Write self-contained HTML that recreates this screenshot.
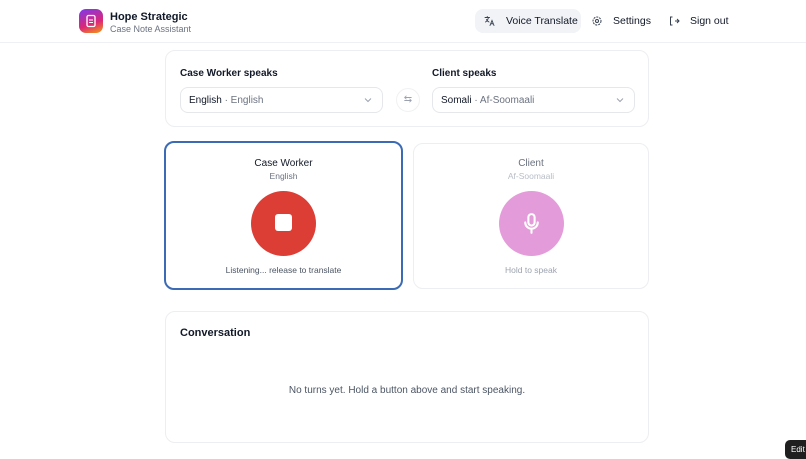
<!DOCTYPE html>
<html><head><meta charset="utf-8"><style>
*{box-sizing:border-box;margin:0;padding:0}
body{width:806px;height:459px;overflow:hidden;background:#fff;font-family:"Liberation Sans",sans-serif;color:#1f2937;position:relative}
.hdr{position:absolute;left:0;top:0;width:806px;height:43px;border-bottom:1px solid #eef0f3;background:#fff}
.logo{position:absolute;left:79px;top:9px;width:24px;height:24px;border-radius:7px;background:linear-gradient(160deg,#7c3aed,#db2777 60%,#f59e0b)}
.t1{position:absolute;left:110px;top:11px;font-size:11px;font-weight:bold;color:#111827}
.t2{position:absolute;left:110px;top:24px;font-size:9px;color:#6b7280}
.nav{position:absolute;top:9px;height:24px;font-size:10.5px;color:#111827;display:flex;align-items:center;white-space:nowrap}
.card{position:absolute;background:#fff;border:1px solid #eceef1;border-radius:10px}
.lbl{position:absolute;font-size:10px;font-weight:bold;color:#111827}
.sel{position:absolute;height:26px;border:1px solid #e5e7eb;border-radius:8px;font-size:10px;padding:7px 8px;color:#111827}
.sel span{color:#6b7280}
.chev{position:absolute;right:10px;top:8px}
.c{text-align:center;position:absolute;width:100%}
</style></head><body>
<div class="hdr">
<div class="logo"><svg width="24" height="24" viewBox="0 0 24 24"><rect x="8" y="6.5" width="8" height="11" rx="1.5" fill="none" stroke="#fff" stroke-width="1.3"/><path d="M10 11h4M10 13.5h4" stroke="#fff" stroke-width="1.1"/></svg></div>
<div class="t1">Hope Strategic</div><div class="t2">Case Note Assistant</div>
<div class="nav" style="left:475px;width:106px;background:#f1f3f6;border-radius:8px;padding-left:9px"><svg width="12" height="12" viewBox="0 0 24 24" fill="none" stroke="#374151" stroke-width="1.8" stroke-linecap="round"><path d="M2 5h9M6.5 3v2M9 5c-1 4-3 7-6 9M5 9c1 2 3 4 5 5M12 21l4-10 4 10M13.5 17.5h5"/></svg><span style="margin-left:10px">Voice Translate</span></div>
<div class="nav" style="left:591px"><svg width="12" height="12" viewBox="0 0 24 24" fill="none" stroke="#374151" stroke-width="2"><circle cx="12" cy="12" r="3"/><circle cx="12" cy="12" r="8" stroke-dasharray="4 2"/></svg><span style="margin-left:10px">Settings</span></div>
<div class="nav" style="left:668px"><svg width="12" height="12" viewBox="0 0 24 24" fill="none" stroke="#374151" stroke-width="2"><path d="M9 4H5v16h4M14 12h7M18 8l4 4-4 4"/></svg><span style="margin-left:10px">Sign out</span></div>
</div>
<div class="card" style="left:165px;top:50px;width:484px;height:77px">
<div class="lbl" style="left:14px;top:17px">Case Worker speaks</div>
<div class="lbl" style="left:266px;top:17px">Client speaks</div>
<div class="sel" style="left:14px;top:36px;width:203px">English <span>· English</span><svg class="chev" width="8" height="8" viewBox="0 0 8 8"><path d="M1 2.5l3 3 3-3" fill="none" stroke="#9ca3af"/></svg></div>
<div style="position:absolute;left:230px;top:37px;width:24px;height:24px;border-radius:12px;border:1px solid #f0f1f3;font-size:10px;color:#9ca3af;text-align:center;line-height:22px">⇆</div>
<div class="sel" style="left:266px;top:36px;width:203px">Somali <span>· Af-Soomaali</span><svg class="chev" width="8" height="8" viewBox="0 0 8 8"><path d="M1 2.5l3 3 3-3" fill="none" stroke="#9ca3af"/></svg></div>
</div>
<div class="card" style="left:164px;top:141px;width:239px;height:149px;border:2px solid #3b6bb5">
<div class="c" style="top:15px;font-size:10px;color:#111827">Case Worker</div>
<div class="c" style="top:28px;font-size:8.5px;color:#6b7280">English</div>
<div style="position:absolute;left:85px;top:48px;width:65px;height:65px;border-radius:50%;background:#dc3d35"><div style="position:absolute;left:24px;top:23px;width:17px;height:17px;background:#fff;border-radius:3px"></div></div>
<div class="c" style="top:122px;font-size:8.5px;color:#4b5563">Listening... release to translate</div>
</div>
<div class="card" style="left:413px;top:143px;width:236px;height:146px">
<div class="c" style="top:14px;font-size:10px;color:#6b7280">Client</div>
<div class="c" style="top:27px;font-size:8.5px;color:#b8bdc6">Af-Soomaali</div>
<div style="position:absolute;left:85px;top:47px;width:65px;height:65px;border-radius:50%;background:#e49bd9"><svg style="position:absolute;left:20px;top:20px" width="25" height="25" viewBox="0 0 24 24" fill="none" stroke="#fff" stroke-width="2" stroke-linecap="round"><rect x="9" y="3" width="6" height="11" rx="3"/><path d="M6 11a6 6 0 0 0 12 0M12 17v4"/></svg></div>
<div class="c" style="top:121px;font-size:8.5px;color:#9ca3af">Hold to speak</div>
</div>
<div class="card" style="left:165px;top:311px;width:484px;height:132px">
<div style="position:absolute;left:14px;top:15px;font-size:11px;font-weight:bold;color:#111827">Conversation</div>
<div class="c" style="top:73px;font-size:10px;color:#4b5563">No turns yet. Hold a button above and start speaking.</div>
</div>
<div style="position:absolute;left:785px;top:440px;width:30px;height:19px;background:#1f1f1f;border-radius:5px;color:#fff;font-size:8px;padding:5px 0 0 6px">Edit</div>
</body></html>
